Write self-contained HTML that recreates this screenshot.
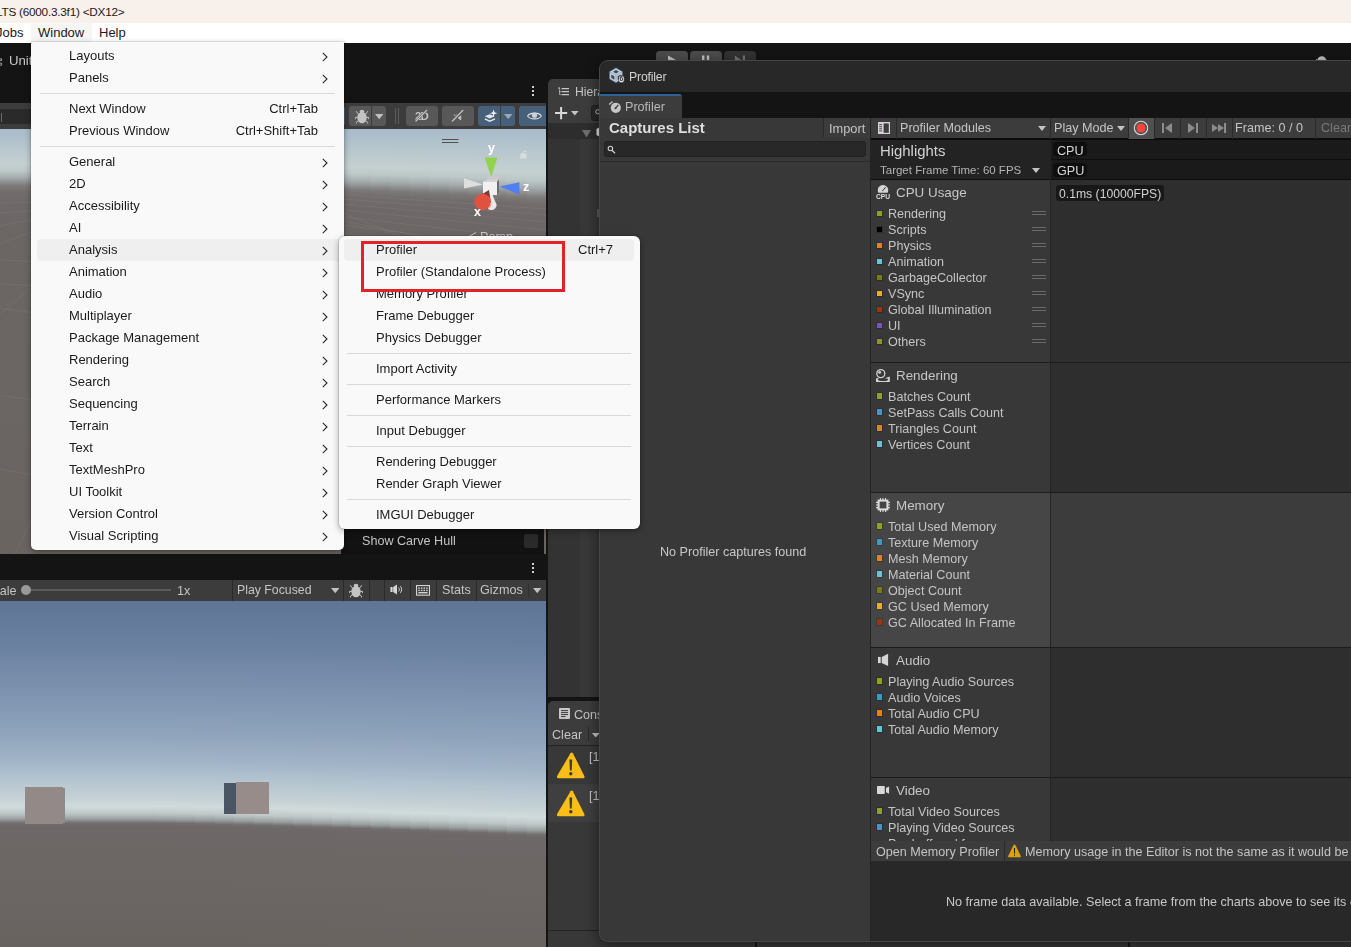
<!DOCTYPE html><html><head><meta charset="utf-8"><title>Unity Profiler</title><style>
*{box-sizing:border-box;margin:0;padding:0}
html,body{width:1351px;height:947px;overflow:hidden;background:#141414}
body{position:relative;font-family:"Liberation Sans",sans-serif;font-size:12.6px;color:#c4c4c4}
.a{position:absolute}
.t{position:absolute;white-space:nowrap;line-height:16px;height:16px;will-change:transform}
.m{position:absolute;white-space:nowrap;font-size:13px;color:#1b1b1b;line-height:22px;height:22px}
.sep{position:absolute;height:1px;background:#d9d9d9}
.chev{position:absolute;width:6px;height:10px}
.sw{position:absolute;width:5.8px;height:5.8px;box-shadow:0 0 0 0.6px rgba(20,20,20,.4)}
.hb{position:absolute;width:14px;height:4px;border-top:1px solid #6a6a6a;border-bottom:1px solid #6a6a6a}
.hl{position:absolute;height:1px;background:#1f1f1f}
</style></head><body>
<div class="a" style="left:0;top:0;width:1351px;height:23px;background:#f8f0ea"></div>
<div class="a" style="left:-4px;top:3px;font-size:11.75px;color:#1b1b1b;white-space:nowrap;line-height:17px;letter-spacing:-0.23px">LTS (6000.3.3f1) &lt;DX12&gt;</div>
<div class="a" style="left:0;top:23px;width:1351px;height:20px;background:#fff"></div>
<div class="a" style="left:31px;top:23px;width:61px;height:20px;background:#f6f6f6"></div>
<div class="m" style="left:-4px;top:22px">Jobs</div>
<div class="m" style="left:38px;top:22px">Window</div>
<div class="m" style="left:99px;top:22px">Help</div>
<div class="a" style="left:0;top:43px;width:1351px;height:904px;background:#141414"></div>
<div class="t" style="left:8.5px;top:53px;font-size:13.2px;color:#c8c8c8">Unity</div>
<div class="a" style="left:0;top:103px;width:546px;height:26px;background:#3c3c3c"></div>
<div class="a" style="left:-5px;top:109px;width:45px;height:15px;background:#2a2a2a;border-radius:3px"></div>
<div class="a" id="scene" style="left:0px;top:129px;width:546px;height:425px;overflow:hidden">
<div class="a" style="left:0.00px;top:0;width:20.10px;height:425px;background:linear-gradient(#a7bbca 0.0px,#b9c8ce 20.5px,#c5d0d1 35.3px,#bcc7c8 42.2px,#a5adae 48.4px,#8b8c8c 53.6px,#7b7877 57.0px,#726d6c 63.0px,#6e6968 75.0px,#6b6664 107.0px,#6a6461 422.0px)"></div>
<div class="a" style="left:19.50px;top:0;width:20.10px;height:425px;background:linear-gradient(#a7bbca 0.0px,#b9c8ce 20.5px,#c5d0d1 35.3px,#bcc7c8 42.2px,#a5adae 48.4px,#8b8c8c 53.6px,#7b7877 57.0px,#726d6c 63.0px,#6e6968 75.0px,#6b6664 107.0px,#6a6461 422.0px)"></div>
<div class="a" style="left:39.00px;top:0;width:20.10px;height:425px;background:linear-gradient(#a7bbca 0.0px,#b9c8ce 20.5px,#c5d0d1 35.3px,#bcc7c8 42.2px,#a5adae 48.4px,#8b8c8c 53.6px,#7b7877 57.0px,#726d6c 63.0px,#6e6968 75.0px,#6b6664 107.0px,#6a6461 422.0px)"></div>
<div class="a" style="left:58.50px;top:0;width:20.10px;height:425px;background:linear-gradient(#a7bbca 0.0px,#b9c8ce 20.5px,#c5d0d1 35.3px,#bcc7c8 42.2px,#a5adae 48.4px,#8b8c8c 53.6px,#7b7877 57.0px,#726d6c 63.0px,#6e6968 75.0px,#6b6664 107.0px,#6a6461 422.0px)"></div>
<div class="a" style="left:78.00px;top:0;width:20.10px;height:425px;background:linear-gradient(#a7bbca 0.0px,#b9c8ce 20.5px,#c5d0d1 35.3px,#bcc7c8 42.2px,#a5adae 48.4px,#8b8c8c 53.6px,#7b7877 57.0px,#726d6c 63.0px,#6e6968 75.0px,#6b6664 107.0px,#6a6461 422.0px)"></div>
<div class="a" style="left:97.50px;top:0;width:20.10px;height:425px;background:linear-gradient(#a7bbca 0.0px,#b9c8ce 20.5px,#c5d0d1 35.3px,#bcc7c8 42.2px,#a5adae 48.5px,#8b8c8c 53.6px,#7b7877 57.0px,#726d6c 63.0px,#6e6968 75.0px,#6b6664 107.0px,#6a6461 422.0px)"></div>
<div class="a" style="left:117.00px;top:0;width:20.10px;height:425px;background:linear-gradient(#a7bbca 0.0px,#b9c8ce 20.5px,#c5d0d1 35.4px,#bcc7c8 42.2px,#a5adae 48.5px,#8b8c8c 53.6px,#7b7877 57.0px,#726d6c 63.0px,#6e6968 75.0px,#6b6664 107.0px,#6a6461 422.0px)"></div>
<div class="a" style="left:136.50px;top:0;width:20.10px;height:425px;background:linear-gradient(#a7bbca 0.0px,#b9c8ce 20.6px,#c5d0d1 35.4px,#bcc7c8 42.3px,#a5adae 48.6px,#8b8c8c 53.7px,#7b7877 57.1px,#726d6c 63.1px,#6e6968 75.1px,#6b6664 107.1px,#6a6461 422.1px)"></div>
<div class="a" style="left:156.00px;top:0;width:20.10px;height:425px;background:linear-gradient(#a7bbca 0.0px,#b9c8ce 20.6px,#c5d0d1 35.5px,#bcc7c8 42.4px,#a5adae 48.7px,#8b8c8c 53.8px,#7b7877 57.3px,#726d6c 63.3px,#6e6968 75.3px,#6b6664 107.3px,#6a6461 422.3px)"></div>
<div class="a" style="left:175.50px;top:0;width:20.10px;height:425px;background:linear-gradient(#a7bbca 0.0px,#b9c8ce 20.7px,#c5d0d1 35.6px,#bcc7c8 42.5px,#a5adae 48.9px,#8b8c8c 54.0px,#7b7877 57.5px,#726d6c 63.5px,#6e6968 75.5px,#6b6664 107.5px,#6a6461 422.5px)"></div>
<div class="a" style="left:195.00px;top:0;width:20.10px;height:425px;background:linear-gradient(#a7bbca 0.0px,#b9c8ce 20.8px,#c5d0d1 35.8px,#bcc7c8 42.7px,#a5adae 49.1px,#8b8c8c 54.3px,#7b7877 57.7px,#726d6c 63.7px,#6e6968 75.7px,#6b6664 107.7px,#6a6461 422.7px)"></div>
<div class="a" style="left:214.50px;top:0;width:20.10px;height:425px;background:linear-gradient(#a7bbca 0.0px,#b9c8ce 20.9px,#c5d0d1 36.0px,#bcc7c8 42.9px,#a5adae 49.3px,#8b8c8c 54.5px,#7b7877 58.0px,#726d6c 64.0px,#6e6968 76.0px,#6b6664 108.0px,#6a6461 423.0px)"></div>
<div class="a" style="left:234.00px;top:0;width:20.10px;height:425px;background:linear-gradient(#a7bbca 0.0px,#b9c8ce 21.0px,#c5d0d1 36.2px,#bcc7c8 43.2px,#a5adae 49.6px,#8b8c8c 54.8px,#7b7877 58.4px,#726d6c 64.4px,#6e6968 76.4px,#6b6664 108.4px,#6a6461 423.4px)"></div>
<div class="a" style="left:253.50px;top:0;width:20.10px;height:425px;background:linear-gradient(#a7bbca 0.0px,#b9c8ce 21.1px,#c5d0d1 36.4px,#bcc7c8 43.5px,#a5adae 49.9px,#8b8c8c 55.2px,#7b7877 58.7px,#726d6c 64.7px,#6e6968 76.7px,#6b6664 108.7px,#6a6461 423.7px)"></div>
<div class="a" style="left:273.00px;top:0;width:20.10px;height:425px;background:linear-gradient(#a7bbca 0.0px,#b9c8ce 21.3px,#c5d0d1 36.7px,#bcc7c8 43.8px,#a5adae 50.3px,#8b8c8c 55.6px,#7b7877 59.2px,#726d6c 65.2px,#6e6968 77.2px,#6b6664 109.2px,#6a6461 424.2px)"></div>
<div class="a" style="left:292.50px;top:0;width:20.10px;height:425px;background:linear-gradient(#a7bbca 0.0px,#b9c8ce 21.5px,#c5d0d1 37.0px,#bcc7c8 44.2px,#a5adae 50.7px,#8b8c8c 56.1px,#7b7877 59.7px,#726d6c 65.7px,#6e6968 77.7px,#6b6664 109.7px,#6a6461 424.7px)"></div>
<div class="a" style="left:312.00px;top:0;width:20.10px;height:425px;background:linear-gradient(#a7bbca 0.0px,#b9c8ce 21.7px,#c5d0d1 37.3px,#bcc7c8 44.6px,#a5adae 51.2px,#8b8c8c 56.6px,#7b7877 60.2px,#726d6c 66.2px,#6e6968 78.2px,#6b6664 110.2px,#6a6461 425.2px)"></div>
<div class="a" style="left:331.50px;top:0;width:20.10px;height:425px;background:linear-gradient(#a7bbca 0.0px,#b9c8ce 21.9px,#c5d0d1 37.7px,#bcc7c8 45.0px,#a5adae 51.7px,#8b8c8c 57.2px,#7b7877 60.8px,#726d6c 66.8px,#6e6968 78.8px,#6b6664 110.8px,#6a6461 425.8px)"></div>
<div class="a" style="left:351.00px;top:0;width:20.10px;height:425px;background:linear-gradient(#a7bbca 0.0px,#b9c8ce 22.1px,#c5d0d1 38.1px,#bcc7c8 45.5px,#a5adae 52.2px,#8b8c8c 57.8px,#7b7877 61.4px,#726d6c 67.4px,#6e6968 79.4px,#6b6664 111.4px,#6a6461 426.4px)"></div>
<div class="a" style="left:370.50px;top:0;width:20.10px;height:425px;background:linear-gradient(#a7bbca 0.0px,#b9c8ce 22.4px,#c5d0d1 38.5px,#bcc7c8 46.0px,#a5adae 52.8px,#8b8c8c 58.4px,#7b7877 62.1px,#726d6c 68.1px,#6e6968 80.1px,#6b6664 112.1px,#6a6461 427.1px)"></div>
<div class="a" style="left:390.00px;top:0;width:20.10px;height:425px;background:linear-gradient(#a7bbca 0.0px,#b9c8ce 22.6px,#c5d0d1 39.0px,#bcc7c8 46.5px,#a5adae 53.4px,#8b8c8c 59.1px,#7b7877 62.9px,#726d6c 68.9px,#6e6968 80.9px,#6b6664 112.9px,#6a6461 427.9px)"></div>
<div class="a" style="left:409.50px;top:0;width:20.10px;height:425px;background:linear-gradient(#a7bbca 0.0px,#b9c8ce 22.9px,#c5d0d1 39.5px,#bcc7c8 47.1px,#a5adae 54.1px,#8b8c8c 59.8px,#7b7877 63.7px,#726d6c 69.7px,#6e6968 81.7px,#6b6664 113.7px,#6a6461 428.7px)"></div>
<div class="a" style="left:429.00px;top:0;width:20.10px;height:425px;background:linear-gradient(#a7bbca 0.0px,#b9c8ce 23.2px,#c5d0d1 40.0px,#bcc7c8 47.7px,#a5adae 54.8px,#8b8c8c 60.6px,#7b7877 64.5px,#726d6c 70.5px,#6e6968 82.5px,#6b6664 114.5px,#6a6461 429.5px)"></div>
<div class="a" style="left:448.50px;top:0;width:20.10px;height:425px;background:linear-gradient(#a7bbca 0.0px,#b9c8ce 23.5px,#c5d0d1 40.5px,#bcc7c8 48.4px,#a5adae 55.6px,#8b8c8c 61.5px,#7b7877 65.4px,#726d6c 71.4px,#6e6968 83.4px,#6b6664 115.4px,#6a6461 430.4px)"></div>
<div class="a" style="left:468.00px;top:0;width:20.10px;height:425px;background:linear-gradient(#a7bbca 0.0px,#b9c8ce 23.9px,#c5d0d1 41.1px,#bcc7c8 49.1px,#a5adae 56.4px,#8b8c8c 62.3px,#7b7877 66.3px,#726d6c 72.3px,#6e6968 84.3px,#6b6664 116.3px,#6a6461 431.3px)"></div>
<div class="a" style="left:487.50px;top:0;width:20.10px;height:425px;background:linear-gradient(#a7bbca 0.0px,#b9c8ce 24.2px,#c5d0d1 41.7px,#bcc7c8 49.8px,#a5adae 57.2px,#8b8c8c 63.3px,#7b7877 67.3px,#726d6c 73.3px,#6e6968 85.3px,#6b6664 117.3px,#6a6461 432.3px)"></div>
<div class="a" style="left:507.00px;top:0;width:20.10px;height:425px;background:linear-gradient(#a7bbca 0.0px,#b9c8ce 24.6px,#c5d0d1 42.4px,#bcc7c8 50.6px,#a5adae 58.1px,#8b8c8c 64.2px,#7b7877 68.4px,#726d6c 74.4px,#6e6968 86.4px,#6b6664 118.4px,#6a6461 433.4px)"></div>
<div class="a" style="left:526.50px;top:0;width:20.10px;height:425px;background:linear-gradient(#a7bbca 0.0px,#b9c8ce 25.0px,#c5d0d1 43.1px,#bcc7c8 51.4px,#a5adae 59.0px,#8b8c8c 65.3px,#7b7877 69.4px,#726d6c 75.4px,#6e6968 87.4px,#6b6664 119.4px,#6a6461 434.4px)"></div>
</div>
<div class="a" style="left:341px;top:520px;width:203px;height:34px;background:#121212"></div>
<div class="t" style="left:362px;top:533px">Show Carve Hull</div>
<div class="a" style="left:524px;top:534px;width:14px;height:14px;background:#2a2a2a;border-radius:2px"></div>
<div class="a" style="left:0;top:554px;width:546px;height:26px;background:#141414"></div>
<div class="a" style="left:0;top:580px;width:546px;height:21px;background:#3c3c3c"></div>
<div class="a" id="game" style="left:0px;top:601px;width:546px;height:346px;overflow:hidden">
<div class="a" style="left:0.00px;top:0;width:20.10px;height:346px;background:linear-gradient(#5f7596 0.0px,#6c82a1 48.8px,#8096b2 99.0px,#90a4bc 133.2px,#a0b3c7 159.0px,#b3c4d0 177.6px,#c5d1d5 196.9px,#d0dbdb 205.4px,#c0c9c9 212.0px,#9aa0a1 218.0px,#726e6d 222.0px,#6e6968 225.0px,#6c6765 262.0px,#68635f 347.0px)"></div>
<div class="a" style="left:19.50px;top:0;width:20.10px;height:346px;background:linear-gradient(#5f7596 0.0px,#6c82a1 48.8px,#8096b2 99.0px,#90a4bc 133.2px,#a0b3c7 159.0px,#b3c4d0 177.6px,#c5d1d5 196.9px,#d0dbdb 205.4px,#c0c9c9 212.0px,#9aa0a1 218.0px,#726e6d 222.0px,#6e6968 225.0px,#6c6765 262.0px,#68635f 347.0px)"></div>
<div class="a" style="left:39.00px;top:0;width:20.10px;height:346px;background:linear-gradient(#5f7596 0.0px,#6c82a1 48.8px,#8096b2 99.0px,#90a4bc 133.2px,#a0b3c7 159.0px,#b3c4d0 177.6px,#c5d1d5 196.9px,#d0dbdb 205.4px,#c0c9c9 212.0px,#9aa0a1 218.0px,#726e6d 222.0px,#6e6968 225.0px,#6c6765 262.0px,#68635f 347.0px)"></div>
<div class="a" style="left:58.50px;top:0;width:20.10px;height:346px;background:linear-gradient(#5f7596 0.0px,#6c82a1 48.8px,#8096b2 99.0px,#90a4bc 133.2px,#a0b3c7 159.0px,#b3c4d0 177.6px,#c5d1d5 196.9px,#d0dbdb 205.4px,#c0c9c9 212.0px,#9aa0a1 218.0px,#726e6d 222.0px,#6e6968 225.0px,#6c6765 262.0px,#68635f 347.0px)"></div>
<div class="a" style="left:78.00px;top:0;width:20.10px;height:346px;background:linear-gradient(#5f7596 0.0px,#6c82a1 48.8px,#8096b2 99.0px,#90a4bc 133.2px,#a0b3c7 159.0px,#b3c4d0 177.6px,#c5d1d5 196.9px,#d0dbdb 205.4px,#c0c9c9 212.0px,#9aa0a1 218.0px,#726e6d 222.0px,#6e6968 225.0px,#6c6765 262.0px,#68635f 347.0px)"></div>
<div class="a" style="left:97.50px;top:0;width:20.10px;height:346px;background:linear-gradient(#5f7596 0.0px,#6c82a1 48.8px,#8096b2 99.0px,#90a4bc 133.2px,#a0b3c7 159.0px,#b3c4d0 177.6px,#c5d1d5 196.9px,#d0dbdb 205.4px,#c0c9c9 212.0px,#9aa0a1 218.0px,#726e6d 222.0px,#6e6968 225.0px,#6c6765 262.0px,#68635f 347.0px)"></div>
<div class="a" style="left:117.00px;top:0;width:20.10px;height:346px;background:linear-gradient(#5f7596 0.0px,#6c82a1 48.8px,#8096b2 99.0px,#90a4bc 133.2px,#a0b3c7 159.0px,#b3c4d0 177.6px,#c5d1d5 196.9px,#d0dbdb 205.4px,#c0c9c9 212.0px,#9aa0a1 218.0px,#726e6d 222.0px,#6e6968 225.0px,#6c6765 262.0px,#68635f 347.0px)"></div>
<div class="a" style="left:136.50px;top:0;width:20.10px;height:346px;background:linear-gradient(#5f7596 0.0px,#6c82a1 48.8px,#8096b2 99.0px,#90a4bc 133.2px,#a0b3c7 159.0px,#b3c4d0 177.6px,#c5d1d5 196.9px,#d0dbdb 205.4px,#c0c9c9 212.0px,#9aa0a1 218.0px,#726e6d 222.0px,#6e6968 225.0px,#6c6765 262.0px,#68635f 347.0px)"></div>
<div class="a" style="left:156.00px;top:0;width:20.10px;height:346px;background:linear-gradient(#5f7596 0.0px,#6c82a1 48.9px,#8096b2 99.1px,#90a4bc 133.3px,#a0b3c7 159.1px,#b3c4d0 177.7px,#c5d1d5 197.1px,#d0dbdb 205.5px,#c0c9c9 212.2px,#9aa0a1 218.2px,#726e6d 222.2px,#6e6968 225.2px,#6c6765 262.2px,#68635f 347.2px)"></div>
<div class="a" style="left:175.50px;top:0;width:20.10px;height:346px;background:linear-gradient(#5f7596 0.0px,#6c82a1 49.0px,#8096b2 99.2px,#90a4bc 133.5px,#a0b3c7 159.3px,#b3c4d0 178.0px,#c5d1d5 197.4px,#d0dbdb 205.8px,#c0c9c9 212.5px,#9aa0a1 218.5px,#726e6d 222.5px,#6e6968 225.5px,#6c6765 262.5px,#68635f 347.5px)"></div>
<div class="a" style="left:195.00px;top:0;width:20.10px;height:346px;background:linear-gradient(#5f7596 0.0px,#6c82a1 49.0px,#8096b2 99.4px,#90a4bc 133.7px,#a0b3c7 159.6px,#b3c4d0 178.3px,#c5d1d5 197.7px,#d0dbdb 206.2px,#c0c9c9 212.9px,#9aa0a1 218.9px,#726e6d 222.9px,#6e6968 225.9px,#6c6765 262.9px,#68635f 347.9px)"></div>
<div class="a" style="left:214.50px;top:0;width:20.10px;height:346px;background:linear-gradient(#5f7596 0.0px,#6c82a1 49.1px,#8096b2 99.6px,#90a4bc 134.0px,#a0b3c7 159.9px,#b3c4d0 178.7px,#c5d1d5 198.1px,#d0dbdb 206.6px,#c0c9c9 213.3px,#9aa0a1 219.3px,#726e6d 223.4px,#6e6968 226.4px,#6c6765 263.4px,#68635f 348.4px)"></div>
<div class="a" style="left:234.00px;top:0;width:20.10px;height:346px;background:linear-gradient(#5f7596 0.0px,#6c82a1 49.2px,#8096b2 99.8px,#90a4bc 134.3px,#a0b3c7 160.3px,#b3c4d0 179.1px,#c5d1d5 198.5px,#d0dbdb 207.1px,#c0c9c9 213.8px,#9aa0a1 219.8px,#726e6d 223.8px,#6e6968 226.8px,#6c6765 263.8px,#68635f 348.8px)"></div>
<div class="a" style="left:253.50px;top:0;width:20.10px;height:346px;background:linear-gradient(#5f7596 0.0px,#6c82a1 49.4px,#8096b2 100.1px,#90a4bc 134.6px,#a0b3c7 160.6px,#b3c4d0 179.5px,#c5d1d5 199.0px,#d0dbdb 207.5px,#c0c9c9 214.3px,#9aa0a1 220.3px,#726e6d 224.4px,#6e6968 227.4px,#6c6765 264.4px,#68635f 349.4px)"></div>
<div class="a" style="left:273.00px;top:0;width:20.10px;height:346px;background:linear-gradient(#5f7596 0.0px,#6c82a1 49.5px,#8096b2 100.3px,#90a4bc 134.9px,#a0b3c7 161.0px,#b3c4d0 179.9px,#c5d1d5 199.5px,#d0dbdb 208.0px,#c0c9c9 214.8px,#9aa0a1 220.8px,#726e6d 224.9px,#6e6968 227.9px,#6c6765 264.9px,#68635f 349.9px)"></div>
<div class="a" style="left:292.50px;top:0;width:20.10px;height:346px;background:linear-gradient(#5f7596 0.0px,#6c82a1 49.6px,#8096b2 100.6px,#90a4bc 135.3px,#a0b3c7 161.4px,#b3c4d0 180.4px,#c5d1d5 200.0px,#d0dbdb 208.6px,#c0c9c9 215.3px,#9aa0a1 221.4px,#726e6d 225.5px,#6e6968 228.5px,#6c6765 265.5px,#68635f 350.5px)"></div>
<div class="a" style="left:312.00px;top:0;width:20.10px;height:346px;background:linear-gradient(#5f7596 0.0px,#6c82a1 49.7px,#8096b2 100.8px,#90a4bc 135.6px,#a0b3c7 161.9px,#b3c4d0 180.8px,#c5d1d5 200.5px,#d0dbdb 209.1px,#c0c9c9 215.9px,#9aa0a1 222.0px,#726e6d 226.1px,#6e6968 229.1px,#6c6765 266.1px,#68635f 351.1px)"></div>
<div class="a" style="left:331.50px;top:0;width:20.10px;height:346px;background:linear-gradient(#5f7596 0.0px,#6c82a1 49.9px,#8096b2 101.1px,#90a4bc 136.0px,#a0b3c7 162.3px,#b3c4d0 181.3px,#c5d1d5 201.0px,#d0dbdb 209.7px,#c0c9c9 216.5px,#9aa0a1 222.6px,#726e6d 226.7px,#6e6968 229.7px,#6c6765 266.7px,#68635f 351.7px)"></div>
<div class="a" style="left:351.00px;top:0;width:20.10px;height:346px;background:linear-gradient(#5f7596 0.0px,#6c82a1 50.0px,#8096b2 101.4px,#90a4bc 136.4px,#a0b3c7 162.7px,#b3c4d0 181.8px,#c5d1d5 201.6px,#d0dbdb 210.2px,#c0c9c9 217.1px,#9aa0a1 223.2px,#726e6d 227.3px,#6e6968 230.3px,#6c6765 267.3px,#68635f 352.3px)"></div>
<div class="a" style="left:370.50px;top:0;width:20.10px;height:346px;background:linear-gradient(#5f7596 0.0px,#6c82a1 50.1px,#8096b2 101.7px,#90a4bc 136.8px,#a0b3c7 163.2px,#b3c4d0 182.3px,#c5d1d5 202.2px,#d0dbdb 210.8px,#c0c9c9 217.7px,#9aa0a1 223.8px,#726e6d 227.9px,#6e6968 230.9px,#6c6765 267.9px,#68635f 352.9px)"></div>
<div class="a" style="left:390.00px;top:0;width:20.10px;height:346px;background:linear-gradient(#5f7596 0.0px,#6c82a1 50.3px,#8096b2 102.0px,#90a4bc 137.2px,#a0b3c7 163.7px,#b3c4d0 182.9px,#c5d1d5 202.8px,#d0dbdb 211.4px,#c0c9c9 218.3px,#9aa0a1 224.5px,#726e6d 228.6px,#6e6968 231.6px,#6c6765 268.6px,#68635f 353.6px)"></div>
<div class="a" style="left:409.50px;top:0;width:20.10px;height:346px;background:linear-gradient(#5f7596 0.0px,#6c82a1 50.4px,#8096b2 102.3px,#90a4bc 137.6px,#a0b3c7 164.2px,#b3c4d0 183.4px,#c5d1d5 203.4px,#d0dbdb 212.1px,#c0c9c9 219.0px,#9aa0a1 225.1px,#726e6d 229.3px,#6e6968 232.3px,#6c6765 269.3px,#68635f 354.3px)"></div>
<div class="a" style="left:429.00px;top:0;width:20.10px;height:346px;background:linear-gradient(#5f7596 0.0px,#6c82a1 50.6px,#8096b2 102.6px,#90a4bc 138.0px,#a0b3c7 164.7px,#b3c4d0 184.0px,#c5d1d5 204.0px,#d0dbdb 212.7px,#c0c9c9 219.6px,#9aa0a1 225.8px,#726e6d 230.0px,#6e6968 233.0px,#6c6765 270.0px,#68635f 355.0px)"></div>
<div class="a" style="left:448.50px;top:0;width:20.10px;height:346px;background:linear-gradient(#5f7596 0.0px,#6c82a1 50.7px,#8096b2 102.9px,#90a4bc 138.4px,#a0b3c7 165.2px,#b3c4d0 184.5px,#c5d1d5 204.6px,#d0dbdb 213.4px,#c0c9c9 220.3px,#9aa0a1 226.5px,#726e6d 230.7px,#6e6968 233.7px,#6c6765 270.7px,#68635f 355.7px)"></div>
<div class="a" style="left:468.00px;top:0;width:20.10px;height:346px;background:linear-gradient(#5f7596 0.0px,#6c82a1 50.9px,#8096b2 103.2px,#90a4bc 138.8px,#a0b3c7 165.7px,#b3c4d0 185.1px,#c5d1d5 205.2px,#d0dbdb 214.0px,#c0c9c9 221.0px,#9aa0a1 227.2px,#726e6d 231.4px,#6e6968 234.4px,#6c6765 271.4px,#68635f 356.4px)"></div>
<div class="a" style="left:487.50px;top:0;width:20.10px;height:346px;background:linear-gradient(#5f7596 0.0px,#6c82a1 51.1px,#8096b2 103.5px,#90a4bc 139.3px,#a0b3c7 166.2px,#b3c4d0 185.7px,#c5d1d5 205.9px,#d0dbdb 214.7px,#c0c9c9 221.7px,#9aa0a1 227.9px,#726e6d 232.1px,#6e6968 235.1px,#6c6765 272.1px,#68635f 357.1px)"></div>
<div class="a" style="left:507.00px;top:0;width:20.10px;height:346px;background:linear-gradient(#5f7596 0.0px,#6c82a1 51.2px,#8096b2 103.9px,#90a4bc 139.7px,#a0b3c7 166.7px,#b3c4d0 186.3px,#c5d1d5 206.5px,#d0dbdb 215.4px,#c0c9c9 222.4px,#9aa0a1 228.7px,#726e6d 232.9px,#6e6968 235.9px,#6c6765 272.9px,#68635f 357.9px)"></div>
<div class="a" style="left:526.50px;top:0;width:20.10px;height:346px;background:linear-gradient(#5f7596 0.0px,#6c82a1 51.4px,#8096b2 104.2px,#90a4bc 140.2px,#a0b3c7 167.3px,#b3c4d0 186.9px,#c5d1d5 207.2px,#d0dbdb 216.1px,#c0c9c9 223.1px,#9aa0a1 229.4px,#726e6d 233.6px,#6e6968 236.6px,#6c6765 273.6px,#68635f 358.6px)"></div>
</div>
<div class="a" style="left:548px;top:79px;width:803px;height:24px;background:#3c3c3c;border-radius:5px 0 0 0"></div>
<div class="a" style="left:548px;top:103px;width:803px;height:20px;background:#3c3c3c"></div>
<div class="a" style="left:548px;top:123px;width:803px;height:16px;background:#2d2d2d"></div>
<div class="a" style="left:548px;top:139px;width:803px;height:558px;background:#383838"></div>
<div class="a" style="left:548px;top:139px;width:32px;height:558px;background:#333333"></div>
<div class="a" style="left:548px;top:701px;width:803px;height:23px;background:#3c3c3c;border-radius:5px 0 0 0"></div>
<div class="a" style="left:548px;top:724px;width:803px;height:22px;background:#3c3c3c"></div>
<div class="a" style="left:548px;top:746px;width:803px;height:38px;background:#383838"></div>
<div class="a" style="left:548px;top:784px;width:803px;height:38px;background:#3f3f3f"></div>
<div class="a" style="left:548px;top:822px;width:803px;height:108px;background:#383838"></div>
<div class="a" style="left:548px;top:931px;width:803px;height:16px;background:#383838"></div>
<div class="a" style="left:755px;top:931px;width:2px;height:16px;background:#161616"></div>
<div class="a" style="left:1128px;top:931px;width:2px;height:16px;background:#161616"></div>
<svg class="a" style="left:532px;top:86px;" width="2" height="10" viewBox="0 0 2 10"><rect x="0" y="0" width="2" height="2" fill="#d0d0d0"/><rect x="0" y="4" width="2" height="2" fill="#d0d0d0"/><rect x="0" y="8" width="2" height="2" fill="#d0d0d0"/></svg>
<div class="a" style="left:338px;top:106px;width:7px;height:20px;background:#46607c;border-radius:0 3px 3px 0"></div>
<div class="a" style="left:349px;top:106px;width:22px;height:20px;background:#585858;border-radius:3px 0 0 3px"></div>
<div class="a" style="left:372px;top:106px;width:14px;height:20px;background:#585858;border-radius:0 3px 3px 0"></div>
<svg class="a" style="left:355px;top:108.6px;" width="14" height="15" viewBox="0 0 14 15"><g fill="#c4c4c4"><ellipse cx="7" cy="8.6" rx="4.7" ry="5.7"/><ellipse cx="7" cy="2.6" rx="2.3" ry="1.9"/></g><g stroke="#c4c4c4" stroke-width="1" fill="none"><path d="M3.4 5.2L1.2 2.2"/><path d="M10.6 5.2L12.8 2.2"/><path d="M2.8 8.4H0.3V10.2"/><path d="M11.2 8.4H13.7V10.2"/><path d="M3.6 11.6L1.4 13.2V14.5"/><path d="M10.4 11.6L12.6 13.2V14.5"/></g></svg>
<svg class="a" style="left:375px;top:114px;" width="8.4" height="5.2" viewBox="0 0 8.4 5.2"><path d="M0 0H8.4L4.2 5.2Z" fill="#c0c0c0"/></svg>
<div class="a" style="left:395px;top:108px;width:1px;height:16px;background:#5c5c5c;"></div>
<div class="a" style="left:398px;top:108px;width:1px;height:16px;background:#5c5c5c;"></div>
<div class="a" style="left:406px;top:106px;width:32px;height:20px;background:#585858;border-radius:3px"></div>
<div class="a" style="left:442px;top:106px;width:32px;height:20px;background:#585858;border-radius:3px"></div>
<div class="a" style="left:478px;top:106px;width:22px;height:20px;background:#46607c;border-radius:3px 0 0 3px"></div>
<div class="a" style="left:501px;top:106px;width:14px;height:20px;background:#46607c;border-radius:0 3px 3px 0"></div>
<div class="a" style="left:519px;top:106px;width:27px;height:20px;background:#46607c;border-radius:3px 0 0 3px"></div>
<svg class="a" style="left:504px;top:114px;" width="8.4" height="5.2" viewBox="0 0 8.4 5.2"><path d="M0 0H8.4L4.2 5.2Z" fill="#9aa7b6"/></svg>
<div class="t" style="left:415px;top:108px;font-size:11.5px;font-weight:bold;color:#c4c4c4;letter-spacing:-0.8px">2D</div>
<svg class="a" style="left:414px;top:109px;" width="16" height="14" viewBox="0 0 16 14"><path d="M1.5 12.5L13 1" stroke="#585858" stroke-width="2.4" fill="none"/><path d="M1.5 12.5L13 1" stroke="#c8c8c8" stroke-width="1.1" fill="none"/></svg>
<svg class="a" style="left:451px;top:109px;" width="14" height="14" viewBox="0 0 14 14"><path d="M3.2 5.5L5.5 9 M5.5 5.5L3.6 9.6" stroke="#c4c4c4" stroke-width="1" fill="none"/><path d="M10.2 6.2V11.6L6.6 8.9Z" fill="#c4c4c4"/><path d="M1 12.5L12.2 1" stroke="#585858" stroke-width="3" fill="none"/><path d="M1 12.5L12.2 1" stroke="#c4c4c4" stroke-width="1.2" fill="none"/></svg>
<svg class="a" style="left:484px;top:109px;" width="14" height="14" viewBox="0 0 14 14"><path d="M0.8 7.2L5.6 5.2L10.6 7.2L5.8 9.4Z" fill="#e6e6e6"/><path d="M0.8 9.8L5.8 12.2L11 9.8" stroke="#e6e6e6" stroke-width="1.4" fill="none"/><path d="M9.6 0.4L10.5 3.3L13.4 4.2L10.5 5.1L9.6 8L8.7 5.1L5.8 4.2L8.7 3.3Z" fill="#f4f4f4"/></svg>
<svg class="a" style="left:527px;top:111px;" width="15" height="10" viewBox="0 0 15 10"><path d="M0.6 5C3 1.2 12 1.2 14.4 5C12 8.8 3 8.8 0.6 5Z" fill="none" stroke="#dedede" stroke-width="1.1"/><circle cx="7.5" cy="4.2" r="2.6" fill="#cfcfcf"/></svg>
<svg class="a" style="left:0px;top:129px;" width="547" height="425" viewBox="0 0 547 425"><g stroke="#ffffff" stroke-opacity="0.055" stroke-width="1" fill="none"><path d="M0 185.5L31 158.6"/><path d="M0 179.5L31 183.5"/><path d="M0 154.6L31 156.6"/><path d="M0 131L31 132.5"/><path d="M0 266L31 271"/><path d="M12 431L31 392"/><path d="M0 115L31 103"/><path d="M0 97L31 91"/><path d="M0 84L31 82"/><path d="M0 74L31 73.5"/><path d="M0 340L31 346"/><path d="M343 66L547 80"/><path d="M343 70L547 86"/><path d="M343 75L547 93"/><path d="M343 81L547 101"/><path d="M343 88L547 111"/><path d="M343 96L547 122"/><path d="M343 104L420 112"/><path d="M343 92L420 107"/><path d="M343 84L400 107"/></g></svg>
<div class="a" style="left:1px;top:113px;width:1px;height:9px;background:#6a6a6a;"></div>
<svg class="a" style="left:442px;top:139px;" width="17" height="5" viewBox="0 0 17 5"><rect x="0" y="0" width="16.4" height="1" fill="#505050"/><rect x="0" y="3" width="16.4" height="1" fill="#505050"/></svg>
<svg class="a" style="left:430px;top:130px;" width="110" height="100" viewBox="0 0 110 100">
<ellipse cx="63.5" cy="48" rx="6" ry="4.6" fill="#c9c9c9"/>
<path d="M54.6 27.6H67.4L61.2 47Z" fill="#8fd44c"/>
<path d="M34 48.2V58.6L52.8 54.6Z" fill="#dedede"/>
<path d="M62.6 65L66.5 74.5C67 79.5 61 81.5 58 79L59 65Z" fill="#e9e9e9"/>
<rect x="53" y="51.7" width="14" height="13.3" fill="#f1f1f1"/>
<path d="M53 51.7L57 49.5H69L67 51.7Z" fill="#d4d4d4"/>
<path d="M67 51.7L69 49.5V62L67 65Z" fill="#6c6c6c"/>
<path d="M69.5 56.6L89.4 52.3V64.5Z" fill="#4f7ff2"/>
<path d="M59 60L49 66L61 73Z" fill="#7b3b36"/>
<circle cx="52.5" cy="72" r="8.2" fill="#e2513f"/>
<path d="M57 65.5L61.5 72.5L58.5 79A8.2 8.2 0 0 0 57 65.5Z" fill="#ea6350"/>
</svg>
<div class="t" style="left:488px;top:140px;font-size:12.5px;color:#ffffff;font-weight:bold">y</div>
<div class="t" style="left:523px;top:179px;font-size:12.5px;color:#ffffff;font-weight:bold">z</div>
<div class="t" style="left:473.5px;top:204px;font-size:12.5px;color:#ffffff;font-weight:bold">x</div>
<svg class="a" style="left:520px;top:150px;" width="7" height="9" viewBox="0 0 7 9"><path d="M3.2 3.6V2.4A1.7 1.7 0 0 1 6.4 2.2" stroke="#d8dde0" stroke-width="1.1" fill="none"/><rect x="0.2" y="3.6" width="6.3" height="5" rx="0.6" fill="#d8dde0"/></svg>
<div class="a" style="left:440px;top:226px;width:100px;height:10.5px;overflow:hidden"><div class="t" style="left:40px;top:3px;font-size:12.6px;color:#c9c9c9">Persp</div><svg class="a" style="left:26px;top:6px" width="11" height="8" viewBox="0 0 11 8"><path d="M10 0.5L1 5.5" stroke="#c9c9c9" stroke-width="1" fill="none"/></svg></div>
<svg class="a" style="left:532px;top:563px;" width="2" height="10" viewBox="0 0 2 10"><rect x="0" y="0" width="2" height="2" fill="#d0d0d0"/><rect x="0" y="4" width="2" height="2" fill="#d0d0d0"/><rect x="0" y="8" width="2" height="2" fill="#d0d0d0"/></svg>
<div class="t" style="left:-15.5px;top:583px;font-size:12.6px;color:#c4c4c4;">Scale</div>
<div class="a" style="left:31px;top:589.3px;width:140px;height:1.6px;background:#5c5c5c;"></div>
<div class="a" style="left:21px;top:585px;width:10px;height:10px;background:#999999;border-radius:5px"></div>
<div class="t" style="left:176.5px;top:583px;font-size:12.6px;color:#c4c4c4;">1x</div>
<div class="a" style="left:232px;top:580px;width:1px;height:21px;background:#2a2a2a;"></div>
<div class="t" style="left:237.3px;top:582px;font-size:12.3px;color:#c4c4c4;">Play Focused</div>
<svg class="a" style="left:330.5px;top:587.5px;" width="8.4" height="5.2" viewBox="0 0 8.4 5.2"><path d="M0 0H8.4L4.2 5.2Z" fill="#c0c0c0"/></svg>
<div class="a" style="left:343px;top:580px;width:1px;height:21px;background:#2a2a2a;"></div>
<svg class="a" style="left:349px;top:582.8px;" width="14" height="15" viewBox="0 0 14 15"><g fill="#c4c4c4"><ellipse cx="7" cy="8.6" rx="4.7" ry="5.7"/><ellipse cx="7" cy="2.6" rx="2.3" ry="1.9"/></g><g stroke="#c4c4c4" stroke-width="1" fill="none"><path d="M3.4 5.2L1.2 2.2"/><path d="M10.6 5.2L12.8 2.2"/><path d="M2.8 8.4H0.3V10.2"/><path d="M11.2 8.4H13.7V10.2"/><path d="M3.6 11.6L1.4 13.2V14.5"/><path d="M10.4 11.6L12.6 13.2V14.5"/></g></svg>
<div class="a" style="left:369px;top:580px;width:1px;height:21px;background:#2a2a2a;"></div>
<div class="a" style="left:384px;top:580px;width:1px;height:21px;background:#2a2a2a;"></div>
<div class="a" style="left:410px;top:580px;width:1px;height:21px;background:#2a2a2a;"></div>
<div class="a" style="left:436px;top:580px;width:1px;height:21px;background:#2a2a2a;"></div>
<div class="a" style="left:476px;top:580px;width:1px;height:21px;background:#2a2a2a;"></div>
<svg class="a" style="left:390px;top:584px;" width="13" height="11" viewBox="0 0 13 11"><rect x="0.4" y="3" width="2.2" height="5" fill="#d6d6d6"/><path d="M3.2 3L7 0.4V10.6L3.2 8Z" fill="#d6d6d6"/><path d="M8.6 3.6C9.6 4.6 9.6 6.4 8.6 7.4" stroke="#d6d6d6" stroke-width="1" fill="none"/><path d="M10.4 2.2C12 4 12 7 10.4 8.8" stroke="#d6d6d6" stroke-width="1" fill="none"/></svg>
<svg class="a" style="left:416px;top:584.5px;" width="14" height="11" viewBox="0 0 14 11"><rect x="0.55" y="0.55" width="12.9" height="9.6" fill="none" stroke="#d4d4d4" stroke-width="1.1"/><g fill="#d4d4d4"><rect x="2.3" y="2.4" width="1.5" height="1.4"/><rect x="4.9" y="2.4" width="1.5" height="1.4"/><rect x="7.5" y="2.4" width="1.5" height="1.4"/><rect x="10.1" y="2.4" width="1.5" height="1.4"/><rect x="2.3" y="4.7" width="1.5" height="1.4"/><rect x="4.9" y="4.7" width="1.5" height="1.4"/><rect x="7.5" y="4.7" width="1.5" height="1.4"/><rect x="10.1" y="4.7" width="1.5" height="1.4"/><rect x="2.3" y="7" width="9.3" height="1.4"/></g></svg>
<div class="t" style="left:441.5px;top:582px;font-size:12.6px;color:#c4c4c4;">Stats</div>
<div class="t" style="left:480px;top:582px;font-size:12.6px;color:#c4c4c4;">Gizmos</div>
<div class="a" style="left:528px;top:584px;width:1px;height:13px;background:#2f2f2f;"></div>
<svg class="a" style="left:532.5px;top:587.5px;" width="8.4" height="5.2" viewBox="0 0 8.4 5.2"><path d="M0 0H8.4L4.2 5.2Z" fill="#c0c0c0"/></svg>
<div class="a" style="left:25px;top:787px;width:38px;height:37px;background:#938986;"></div>
<div class="a" style="left:62.7px;top:788px;width:2.3px;height:35px;background:#8c8a90;"></div>
<div class="a" style="left:224px;top:783px;width:12px;height:31px;background:#4b5664;"></div>
<div class="a" style="left:235.5px;top:782px;width:33px;height:32px;background:#978c89;"></div>
<svg class="a" style="left:558px;top:87px;" width="12" height="9" viewBox="0 0 12 9"><path d="M3.6 1.6H11 M3.6 4.6H11 M3.6 7.6H11" stroke="#c6c6c6" stroke-width="1.2" fill="none"/><path d="M0.3 1.2H2.2 M1.2 0.2V2.2 M1.6 2.4V7.6 M1.6 4.6H2.8 M1.6 7.6H2.8" stroke="#c6c6c6" stroke-width="0.8" fill="none"/></svg>
<div class="t" style="left:574.8px;top:84px;font-size:12.2px;color:#c4c4c4;">Hierarchy</div>
<svg class="a" style="left:555px;top:107px;" width="13" height="13" viewBox="0 0 13 13"><path d="M6.1 0V12.2 M0 6.1H12.2" stroke="#d8d8d8" stroke-width="2" fill="none"/></svg>
<svg class="a" style="left:571px;top:111px;" width="8" height="5" viewBox="0 0 8 5"><path d="M0 0H7.6L3.8 4.6Z" fill="#c4c4c4"/></svg>
<div class="a" style="left:591px;top:105px;width:30px;height:16px;background:#282828;border:1px solid #1f1f1f;border-radius:3px"></div>
<svg class="a" style="left:595px;top:109px;" width="7" height="7" viewBox="0 0 7 7"><circle cx="2.8" cy="2.8" r="2.1" stroke="#bdbdbd" stroke-width="1" fill="none"/><path d="M4.4 4.4L6.6 6.6" stroke="#bdbdbd" stroke-width="1"/></svg>
<svg class="a" style="left:582px;top:129.5px;" width="9" height="7.5" viewBox="0 0 9 7.5"><path d="M0 0H9L4.5 7.5Z" fill="#6e6e6e"/></svg>
<svg class="a" style="left:596px;top:126px;" width="10" height="12" viewBox="0 0 10 12"><path d="M5 0.5L9.5 3V9L5 11.5L0.5 9V3Z" fill="#e6e6e6"/></svg>
<div class="a" style="left:597px;top:208.5px;width:2.2px;height:8.5px;background:#5c5c5c;"></div>
<svg class="a" style="left:558.5px;top:708px;" width="11" height="11" viewBox="0 0 11 11"><rect x="0" y="0" width="11" height="11" rx="1" fill="#c8c8c8"/><path d="M2 2.6H9 M2 4.6H9 M2 6.6H9 M2 8.6H6.5" stroke="#3c3c3c" stroke-width="1"/></svg>
<div class="t" style="left:574.3px;top:707px;font-size:12.6px;color:#c4c4c4;">Console</div>
<div class="t" style="left:552px;top:727px;font-size:12.6px;color:#c4c4c4;">Clear</div>
<div class="a" style="left:587.5px;top:727px;width:1px;height:14px;background:#2a2a2a;"></div>
<svg class="a" style="left:592px;top:732.5px;" width="8" height="5" viewBox="0 0 8 5"><path d="M0 0H7.6L3.8 4.6Z" fill="#c4c4c4"/></svg>
<div class="a" style="left:548px;top:745px;width:52px;height:1px;background:#242424;"></div>
<svg class="a" style="left:557px;top:751.5px;" width="28" height="27" viewBox="0 0 28 27"><path d="M13.5 1.2C14.3 0.2 15.3 0.2 15.9 1.2L27.3 24C27.9 25.3 27.3 26.3 25.9 26.3H1.5C0.1 26.3 -0.5 25.3 0.1 24Z" fill="#fbbd17"/><path d="M12.4 7.5H15.2L14.7 18.5H12.9Z" fill="#3b3b3b"/><circle cx="13.8" cy="21.8" r="1.7" fill="#3b3b3b"/></svg>
<svg class="a" style="left:557px;top:790px;" width="28" height="27" viewBox="0 0 28 27"><path d="M13.5 1.2C14.3 0.2 15.3 0.2 15.9 1.2L27.3 24C27.9 25.3 27.3 26.3 25.9 26.3H1.5C0.1 26.3 -0.5 25.3 0.1 24Z" fill="#fbbd17"/><path d="M12.4 7.5H15.2L14.7 18.5H12.9Z" fill="#3b3b3b"/><circle cx="13.8" cy="21.8" r="1.7" fill="#3b3b3b"/></svg>
<div class="t" style="left:588.5px;top:749px;font-size:12.6px;color:#c4c4c4;">[18:02:11]</div>
<div class="t" style="left:588.5px;top:788px;font-size:12.6px;color:#c4c4c4;">[18:02:11]</div>
<div class="a" style="left:548px;top:930px;width:803px;height:1px;background:#232323;"></div>
<div class="a" style="left:656px;top:51px;width:32px;height:20px;background:#4d4d4d;border-radius:4px"></div>
<div class="a" style="left:690px;top:51px;width:32px;height:20px;background:#4d4d4d;border-radius:4px"></div>
<div class="a" style="left:724px;top:51px;width:32px;height:20px;background:#333333;border-radius:4px"></div>
<svg class="a" style="left:667px;top:55px;" width="12" height="12" viewBox="0 0 12 12"><path d="M1 0.5L10 5.6L1 10.8Z" fill="#c8c8c8"/></svg>
<svg class="a" style="left:701px;top:55px;" width="10" height="12" viewBox="0 0 10 12"><rect x="1" y="0.5" width="2.4" height="10" fill="#c8c8c8"/><rect x="5.8" y="0.5" width="2.4" height="10" fill="#c8c8c8"/></svg>
<svg class="a" style="left:734px;top:55px;" width="12" height="12" viewBox="0 0 12 12"><path d="M0.8 0.5L8 5.6L0.8 10.8Z" fill="#777"/><rect x="8.8" y="0.5" width="2.2" height="10" fill="#777"/></svg>
<svg class="a" style="left:1314px;top:55px;" width="16" height="7" viewBox="0 0 16 7"><path d="M1 6.4L2.6 3.8L3.6 5C3.4 1 10.6 -0.6 12 4.4C13.2 4.4 14 5.4 14.4 6.4Z" fill="#c6c6c6"/></svg>
<svg class="a" style="left:-1px;top:58px;" width="4" height="8" viewBox="0 0 4 8"><path d="M0 0.8H2.6V2.6H0 M0 5.2H2.6V7.2H0" stroke="#9a9a9a" stroke-width="1" fill="none"/></svg>
<div class="a" id="pw" style="left:600px;top:61px;width:760px;height:880px;background:#383838;border-radius:8px 0 0 8px;overflow:hidden;box-shadow:0 0 0 1px #464646, 0 3px 14px 2px rgba(0,0,0,.45)">
<div class="a" style="left:0px;top:0px;width:760px;height:31px;background:#282828;"></div>
<div class="a" style="left:0px;top:31px;width:760px;height:26px;background:#141414;"></div>
<div class="a" style="left:0px;top:33px;width:82px;height:24px;background:#3c3c3c;border-top:2px solid #2d6198;border-radius:0 3px 0 0"></div>
<div class="a" style="left:0px;top:57px;width:270px;height:21px;background:#383838;"></div>
<div class="a" style="left:224px;top:57px;width:46px;height:19px;background:#3c3c3c;"></div>
<div class="a" style="left:4px;top:80px;width:262px;height:16px;background:#282828;border:1px solid #212121;border-radius:3px"></div>
<div class="a" style="left:0px;top:100px;width:270px;height:1px;background:#2a2a2a;"></div>
<div class="a" style="left:270px;top:57px;width:1px;height:823px;background:#232323;"></div>
<div class="a" style="left:271px;top:57px;width:489px;height:21px;background:#3c3c3c;"></div>
<div class="a" style="left:271px;top:77px;width:489px;height:2px;background:#0b0b0b;"></div>
<div class="a" style="left:271px;top:79px;width:179px;height:40px;background:#232323;"></div>
<div class="a" style="left:451px;top:79px;width:309px;height:19px;background:#1a1a1a;"></div>
<div class="a" style="left:451px;top:99px;width:309px;height:19px;background:#1a1a1a;"></div>
<div class="a" style="left:451px;top:98px;width:309px;height:1px;background:#0e0e0e;"></div>
<div class="a" style="left:271px;top:118px;width:489px;height:1px;background:#0e0e0e;"></div>
<div class="a" style="left:450px;top:79px;width:1px;height:701px;background:#232323;"></div>
<div class="a" style="left:271px;top:119px;width:179px;height:182px;background:#383838;"></div>
<div class="a" style="left:451px;top:119px;width:309px;height:182px;background:#2e2e2e;"></div>
<div class="a" style="left:271px;top:301px;width:489px;height:1px;background:#1c1c1c;"></div>
<div class="a" style="left:271px;top:302px;width:179px;height:129px;background:#383838;"></div>
<div class="a" style="left:451px;top:302px;width:309px;height:129px;background:#2e2e2e;"></div>
<div class="a" style="left:271px;top:431px;width:489px;height:1px;background:#1c1c1c;"></div>
<div class="a" style="left:271px;top:432px;width:179px;height:154px;background:#464646;"></div>
<div class="a" style="left:451px;top:432px;width:309px;height:154px;background:#3c3c3c;"></div>
<div class="a" style="left:271px;top:586px;width:489px;height:1px;background:#1c1c1c;"></div>
<div class="a" style="left:271px;top:587px;width:179px;height:129px;background:#383838;"></div>
<div class="a" style="left:451px;top:587px;width:309px;height:129px;background:#2e2e2e;"></div>
<div class="a" style="left:271px;top:716px;width:489px;height:1px;background:#1c1c1c;"></div>
<div class="a" style="left:271px;top:717px;width:179px;height:63px;background:#383838;"></div>
<div class="a" style="left:451px;top:717px;width:309px;height:63px;background:#2e2e2e;"></div>
<div class="a" style="left:271px;top:780px;width:489px;height:1px;background:#1c1c1c;"></div>
<div class="a" style="left:271px;top:780px;width:489px;height:20px;background:#3c3c3c;"></div>
<div class="a" style="left:271px;top:800px;width:489px;height:80px;background:#282828;"></div>
<svg class="a" style="left:8px;top:6px;" width="18" height="18" viewBox="0 0 18 18"><path d="M8 1L14.3 4.65V11.95L8 15.6L1.7 11.95V4.65Z" fill="#c6d3e1" stroke="#6f86a0" stroke-width="0.7"/><path d="M8 8.3L1.7 4.65 M8 8.3L14.3 4.65 M8 8.3V15.6" stroke="#8396ab" stroke-width="0.7" fill="none"/><g fill="#3b4a5b"><path d="M8 2.9L11 4.65L8 6.4L5 4.65Z"/><path d="M3.3 7.5L6.4 9.3V12.7L3.3 10.9Z"/><path d="M12.7 7.5V10.9L9.6 12.7V9.3Z"/></g><rect x="10.6" y="8.4" width="5.6" height="7.4" rx="2.4" fill="#dfe7ef" stroke="#282828" stroke-width="0.7"/><text x="13.4" y="14.4" font-size="6.6" font-weight="bold" text-anchor="middle" fill="#2c333c" font-family="Liberation Sans, sans-serif">6</text></svg>
<svg class="a" style="left:8px;top:39px;" width="15" height="14" viewBox="0 0 15 14"><circle cx="7.8" cy="7.8" r="5.1" fill="#c6c6c6"/><path d="M7.4 8.4L10.3 5" stroke="#3c3c3c" stroke-width="1.2" fill="none"/><circle cx="7.5" cy="8.3" r="1" fill="#3c3c3c"/><path d="M1.2 4.4L4.6 1.4" stroke="#c6c6c6" stroke-width="1.3" fill="none"/></svg>
<svg class="a" style="left:7px;top:84px;" width="10" height="10" viewBox="0 0 10 10"><circle cx="3.4" cy="3.5" r="2.2" stroke="#d0d0d0" stroke-width="1.1" fill="none"/><path d="M5 5.2L8 8.2" stroke="#d0d0d0" stroke-width="1.3" fill="none"/></svg>
<svg class="a" style="left:278px;top:61px;" width="12" height="12" viewBox="0 0 12 12"><rect x="0" y="0" width="12.2" height="12.2" rx="0.6" fill="#d6d2d6"/><rect x="5.6" y="1.4" width="5.2" height="9.4" fill="#3c3c3c"/><path d="M1.2 2.6H4 M1.2 4.7H4 M1.2 6.8H4 M1.2 8.9H4" stroke="#3a2f3a" stroke-width="0.9"/></svg>
<svg class="a" style="left:275px;top:123px;" width="16" height="16" viewBox="0 0 16 16"><path d="M3.44 8.7A5.2 5.2 0 1 1 12.56 8.7Z" fill="#d4d4d4"/><path d="M7.4 7.2L10.6 3.2" stroke="#383838" stroke-width="1"/><text x="8" y="15" font-size="6.7" font-weight="bold" text-anchor="middle" fill="#dedede" font-family="Liberation Sans, sans-serif" letter-spacing="-0.1">CPU</text></svg>
<svg class="a" style="left:275px;top:306px;" width="16" height="16" viewBox="0 0 16 16"><path d="M1 15V11.2H3.2C4.6 13 8.4 13 9.8 11.2L14.8 9.6V15Z" fill="#d2d2d2"/><ellipse cx="8" cy="12.6" rx="5" ry="1.5" fill="#383838"/><circle cx="5.8" cy="6.6" r="4" fill="#383838" stroke="#d2d2d2" stroke-width="1.3"/><circle cx="4.6" cy="5.2" r="1.5" fill="#c8c8c8"/></svg>
<svg class="a" style="left:275px;top:436px;" width="16" height="16" viewBox="0 0 16 16"><rect x="3.6" y="3.6" width="8.8" height="8.8" fill="none" stroke="#dcdcdc" stroke-width="2"/><path d="M5.4 1V3 M8 1V3 M10.6 1V3 M5.4 13V15 M8 13V15 M10.6 13V15 M1 5.4H3 M1 8H3 M1 10.6H3 M13 5.4H15 M13 8H15 M13 10.6H15" stroke="#dcdcdc" stroke-width="1.1"/></svg>
<svg class="a" style="left:277px;top:592px;" width="12" height="14" viewBox="0 0 12 14"><rect x="1" y="3.9" width="2.7" height="6.2" fill="#d6d6d6"/><path d="M4.7 3.9L11.1 0.8V13L4.7 10.1Z" fill="#d6d6d6"/></svg>
<svg class="a" style="left:276px;top:724px;" width="14" height="10" viewBox="0 0 14 10"><rect x="1" y="1" width="7.8" height="8" rx="0.8" fill="#d8d8d8"/><path d="M10 3L13.1 1.6V8.7L10 7.2Z" fill="#d8d8d8"/></svg>
<div class="t" style="left:28.600000000000023px;top:8px;font-size:12.3px;color:#d0d0d0;letter-spacing:-0.2px">Profiler</div>
<div class="t" style="left:24.600000000000023px;top:38px;font-size:12.6px;color:#b8b8b8;">Profiler</div>
<div class="t" style="left:8.5px;top:59px;font-size:15px;color:#dedede;font-weight:bold">Captures List</div>
<div class="a" style="left:223px;top:57px;width:1px;height:19px;background:#2a2a2a;"></div>
<div class="t" style="left:228.60000000000002px;top:60px;font-size:12.8px;color:#c4c4c4;">Import</div>
<div class="t" style="left:60px;top:483px;font-size:12.6px;color:#c8c8c8;">No Profiler captures found</div>
<div class="a" style="left:296px;top:57px;width:1px;height:21px;background:#2a2a2a;"></div>
<div class="t" style="left:300px;top:59px;font-size:12.6px;color:#c4c4c4;">Profiler Modules</div>
<svg class="a" style="left:438px;top:65px;" width="8" height="5" viewBox="0 0 8 5"><path d="M0 0H8L4 5Z" fill="#c4c4c4"/></svg>
<div class="a" style="left:450px;top:57px;width:1px;height:21px;background:#2a2a2a;"></div>
<div class="t" style="left:454px;top:59px;font-size:12.6px;color:#c4c4c4;">Play Mode</div>
<svg class="a" style="left:517px;top:65px;" width="8" height="5" viewBox="0 0 8 5"><path d="M0 0H8L4 5Z" fill="#c4c4c4"/></svg>
<div class="a" style="left:529px;top:57px;width:25px;height:21px;background:#505050;"></div>
<div class="a" style="left:528px;top:57px;width:1px;height:21px;background:#2a2a2a;"></div>
<div class="a" style="left:554px;top:57px;width:1px;height:21px;background:#2a2a2a;"></div>
<div class="a" style="left:580px;top:57px;width:1px;height:21px;background:#2a2a2a;"></div>
<div class="a" style="left:606px;top:57px;width:1px;height:21px;background:#2a2a2a;"></div>
<div class="a" style="left:632px;top:57px;width:1px;height:21px;background:#2a2a2a;"></div>
<div class="a" style="left:715px;top:57px;width:1px;height:21px;background:#2a2a2a;"></div>
<svg class="a" style="left:533px;top:59px;" width="16" height="16" viewBox="0 0 16 16"><circle cx="8" cy="8" r="6.7" fill="none" stroke="#d4d4d4" stroke-width="1.1"/><circle cx="8" cy="8" r="4.5" fill="#f5463d"/></svg>
<svg class="a" style="left:561px;top:62px;" width="12" height="10" viewBox="0 0 12 10"><path d="M1 0H3V10H1Z M11 0V10L4 5Z" fill="#8c8c8c"/></svg>
<svg class="a" style="left:587px;top:62px;" width="12" height="10" viewBox="0 0 12 10"><path d="M9 0H11V10H9Z M1 0V10L8 5Z" fill="#8c8c8c"/></svg>
<svg class="a" style="left:611px;top:62px;" width="16" height="10" viewBox="0 0 16 10"><path d="M13 0H15V10H13Z M1 1V9L7 5Z M7 1V9L13 5Z" fill="#8c8c8c"/></svg>
<div class="t" style="left:635.2px;top:59px;font-size:12.6px;color:#c4c4c4;">Frame: 0 / 0</div>
<div class="t" style="left:721px;top:59px;font-size:12.6px;color:#787878;">Clear</div>
<div class="t" style="left:280.29999999999995px;top:82px;font-size:14.9px;color:#d2d2d2;">Highlights</div>
<div class="t" style="left:279.5px;top:101px;font-size:11.5px;color:#b4b4b4;">Target Frame Time: 60 FPS</div>
<svg class="a" style="left:432px;top:107px;" width="8" height="5" viewBox="0 0 8 5"><path d="M0 0H8L4 5Z" fill="#c4c4c4"/></svg>
<div class="a" style="left:453px;top:81px;width:34px;height:14px;background:#0e0e0e;border-radius:4px"></div>
<div class="a" style="left:453px;top:101.5px;width:34px;height:14px;background:#0e0e0e;border-radius:4px"></div>
<div class="t" style="left:457px;top:82px;font-size:12.6px;color:#d6d6d6;">CPU</div>
<div class="t" style="left:457px;top:102px;font-size:12.6px;color:#d6d6d6;">GPU</div>
<div class="a" style="left:456px;top:124px;width:108px;height:15.5px;background:#181818;border-radius:3px"></div>
<div class="t" style="left:459px;top:125px;font-size:12.2px;color:#d0d0d0;">0.1ms (10000FPS)</div>
<div class="t" style="left:296.20000000000005px;top:124px;font-size:13.4px;color:#c6c6c6;">CPU Usage</div>
<div class="sw" style="left:276.6px;top:149.5px;background:#8aa614"></div>
<div class="t" style="left:288px;top:145px;font-size:12.6px;color:#c4c4c4;">Rendering</div>
<div class="hb" style="left:432px;top:150.4px"></div>
<div class="sw" style="left:276.6px;top:165.5px;background:#000000"></div>
<div class="t" style="left:288px;top:161px;font-size:12.6px;color:#c4c4c4;">Scripts</div>
<div class="hb" style="left:432px;top:166.4px"></div>
<div class="sw" style="left:276.6px;top:181.5px;background:#e8820e"></div>
<div class="t" style="left:288px;top:177px;font-size:12.6px;color:#c4c4c4;">Physics</div>
<div class="hb" style="left:432px;top:182.4px"></div>
<div class="sw" style="left:276.6px;top:197.5px;background:#62c6d4"></div>
<div class="t" style="left:288px;top:193px;font-size:12.6px;color:#c4c4c4;">Animation</div>
<div class="hb" style="left:432px;top:198.39999999999998px"></div>
<div class="sw" style="left:276.6px;top:213.5px;background:#7c7a12"></div>
<div class="t" style="left:288px;top:209px;font-size:12.6px;color:#c4c4c4;">GarbageCollector</div>
<div class="hb" style="left:432px;top:214.39999999999998px"></div>
<div class="sw" style="left:276.6px;top:229.5px;background:#e2b50d"></div>
<div class="t" style="left:288px;top:225px;font-size:12.6px;color:#c4c4c4;">VSync</div>
<div class="hb" style="left:432px;top:230.39999999999998px"></div>
<div class="sw" style="left:276.6px;top:245.5px;background:#a3300f"></div>
<div class="t" style="left:288px;top:241px;font-size:12.6px;color:#c4c4c4;">Global Illumination</div>
<div class="hb" style="left:432px;top:246.39999999999998px"></div>
<div class="sw" style="left:276.6px;top:261.5px;background:#7a55b5"></div>
<div class="t" style="left:288px;top:257px;font-size:12.6px;color:#c4c4c4;">UI</div>
<div class="hb" style="left:432px;top:262.4px"></div>
<div class="sw" style="left:276.6px;top:277.5px;background:#8f9425"></div>
<div class="t" style="left:288px;top:273px;font-size:12.6px;color:#c4c4c4;">Others</div>
<div class="hb" style="left:432px;top:278.4px"></div>
<div class="t" style="left:296.20000000000005px;top:307px;font-size:13.4px;color:#c6c6c6;">Rendering</div>
<div class="sw" style="left:276.6px;top:332.40000000000003px;background:#8aa614"></div>
<div class="t" style="left:288px;top:328px;font-size:12.6px;color:#c4c4c4;">Batches Count</div>
<div class="sw" style="left:276.6px;top:348.40000000000003px;background:#3a9ac0"></div>
<div class="t" style="left:288px;top:344px;font-size:12.6px;color:#c4c4c4;">SetPass Calls Count</div>
<div class="sw" style="left:276.6px;top:364.40000000000003px;background:#e8820e"></div>
<div class="t" style="left:288px;top:360px;font-size:12.6px;color:#c4c4c4;">Triangles Count</div>
<div class="sw" style="left:276.6px;top:380.40000000000003px;background:#62c6d4"></div>
<div class="t" style="left:288px;top:376px;font-size:12.6px;color:#c4c4c4;">Vertices Count</div>
<div class="t" style="left:296.20000000000005px;top:437px;font-size:13.4px;color:#c6c6c6;">Memory</div>
<div class="sw" style="left:276.6px;top:462.30000000000007px;background:#8aa614"></div>
<div class="t" style="left:288px;top:458px;font-size:12.6px;color:#c4c4c4;">Total Used Memory</div>
<div class="sw" style="left:276.6px;top:478.30000000000007px;background:#3a9ac0"></div>
<div class="t" style="left:288px;top:474px;font-size:12.6px;color:#c4c4c4;">Texture Memory</div>
<div class="sw" style="left:276.6px;top:494.30000000000007px;background:#e8820e"></div>
<div class="t" style="left:288px;top:490px;font-size:12.6px;color:#c4c4c4;">Mesh Memory</div>
<div class="sw" style="left:276.6px;top:510.30000000000007px;background:#62c6d4"></div>
<div class="t" style="left:288px;top:506px;font-size:12.6px;color:#c4c4c4;">Material Count</div>
<div class="sw" style="left:276.6px;top:526.3000000000001px;background:#7c7a12"></div>
<div class="t" style="left:288px;top:522px;font-size:12.6px;color:#c4c4c4;">Object Count</div>
<div class="sw" style="left:276.6px;top:542.3000000000001px;background:#e2b50d"></div>
<div class="t" style="left:288px;top:538px;font-size:12.6px;color:#c4c4c4;">GC Used Memory</div>
<div class="sw" style="left:276.6px;top:558.3000000000001px;background:#a3300f"></div>
<div class="t" style="left:288px;top:554px;font-size:12.6px;color:#c4c4c4;">GC Allocated In Frame</div>
<div class="t" style="left:296.20000000000005px;top:592px;font-size:13.4px;color:#c6c6c6;">Audio</div>
<div class="sw" style="left:276.6px;top:617.4px;background:#8aa614"></div>
<div class="t" style="left:288px;top:613px;font-size:12.6px;color:#c4c4c4;">Playing Audio Sources</div>
<div class="sw" style="left:276.6px;top:633.4px;background:#3a9ac0"></div>
<div class="t" style="left:288px;top:629px;font-size:12.6px;color:#c4c4c4;">Audio Voices</div>
<div class="sw" style="left:276.6px;top:649.4px;background:#e8820e"></div>
<div class="t" style="left:288px;top:645px;font-size:12.6px;color:#c4c4c4;">Total Audio CPU</div>
<div class="sw" style="left:276.6px;top:665.4px;background:#62c6d4"></div>
<div class="t" style="left:288px;top:661px;font-size:12.6px;color:#c4c4c4;">Total Audio Memory</div>
<div class="t" style="left:296.20000000000005px;top:722px;font-size:13.4px;color:#c6c6c6;">Video</div>
<div class="sw" style="left:276.6px;top:747.4px;background:#8aa614"></div>
<div class="t" style="left:288px;top:743px;font-size:12.6px;color:#c4c4c4;">Total Video Sources</div>
<div class="sw" style="left:276.6px;top:763.4px;background:#3a9ac0"></div>
<div class="t" style="left:288px;top:759px;font-size:12.6px;color:#c4c4c4;">Playing Video Sources</div>
<div class="a" style="left:271px;top:775px;width:179px;height:5px;overflow:hidden"><div class="t" style="left:17px;top:0px">Pre-buffered frames</div></div>
<div class="t" style="left:275.5px;top:783px;font-size:12.6px;color:#c4c4c4;">Open Memory Profiler</div>
<div class="a" style="left:404px;top:780px;width:1px;height:20px;background:#2a2a2a;"></div>
<svg class="a" style="left:408px;top:782.5px;" width="13" height="14" viewBox="0 0 13 14"><path d="M6.5 0.4C6.9 0.4 7.2 0.7 7.4 1L12.8 12C13 12.6 12.8 13.3 12 13.3H1C0.2 13.3 0 12.6 0.2 12L5.6 1C5.8 0.7 6.1 0.4 6.5 0.4Z" fill="#dba20a"/><rect x="6" y="4" width="1" height="5.6" fill="#241a00"/><rect x="6" y="10.6" width="1" height="1.2" fill="#241a00"/></svg>
<div class="t" style="left:424.5px;top:783px;font-size:12.6px;color:#c4c4c4;">Memory usage in the Editor is not the same as it would be in a Player. Use this for relative comparisons only.</div>
<div class="t" style="left:345.5px;top:833px;font-size:12.6px;color:#c8c8c8;">No frame data available. Select a frame from the charts above to see its details here.</div>
</div>
<div class="a" style="left:31px;top:42px;width:313px;height:508px;background:#f9f9f9;border-radius:2px 0 5px 5px;box-shadow:0 2px 6px rgba(0,0,0,.35), 0 0 0 1px rgba(0,0,0,.08)"></div>
<div class="a" style="left:37px;top:239px;width:306px;height:22px;background:#efefef;border-radius:4px"></div>
<div class="m" style="left:69px;top:45.0px">Layouts</div>
<svg class="chev" style="left:322px;top:52.0px" viewBox="0 0 6 10"><path d="M0.8 0.8 L5 5 L0.8 9.2" fill="none" stroke="#2a2a2a" stroke-width="1.1"/></svg>
<div class="m" style="left:69px;top:67.0px">Panels</div>
<svg class="chev" style="left:322px;top:74.0px" viewBox="0 0 6 10"><path d="M0.8 0.8 L5 5 L0.8 9.2" fill="none" stroke="#2a2a2a" stroke-width="1.1"/></svg>
<div class="m" style="left:69px;top:98.0px">Next Window</div>
<div class="m" style="right:1033px;top:98.0px">Ctrl+Tab</div>
<div class="m" style="left:69px;top:120.0px">Previous Window</div>
<div class="m" style="right:1033px;top:120.0px">Ctrl+Shift+Tab</div>
<div class="m" style="left:69px;top:150.5px">General</div>
<svg class="chev" style="left:322px;top:157.5px" viewBox="0 0 6 10"><path d="M0.8 0.8 L5 5 L0.8 9.2" fill="none" stroke="#2a2a2a" stroke-width="1.1"/></svg>
<div class="m" style="left:69px;top:172.5px">2D</div>
<svg class="chev" style="left:322px;top:179.5px" viewBox="0 0 6 10"><path d="M0.8 0.8 L5 5 L0.8 9.2" fill="none" stroke="#2a2a2a" stroke-width="1.1"/></svg>
<div class="m" style="left:69px;top:194.5px">Accessibility</div>
<svg class="chev" style="left:322px;top:201.5px" viewBox="0 0 6 10"><path d="M0.8 0.8 L5 5 L0.8 9.2" fill="none" stroke="#2a2a2a" stroke-width="1.1"/></svg>
<div class="m" style="left:69px;top:216.5px">AI</div>
<svg class="chev" style="left:322px;top:223.5px" viewBox="0 0 6 10"><path d="M0.8 0.8 L5 5 L0.8 9.2" fill="none" stroke="#2a2a2a" stroke-width="1.1"/></svg>
<div class="m" style="left:69px;top:238.5px">Analysis</div>
<svg class="chev" style="left:322px;top:245.5px" viewBox="0 0 6 10"><path d="M0.8 0.8 L5 5 L0.8 9.2" fill="none" stroke="#2a2a2a" stroke-width="1.1"/></svg>
<div class="m" style="left:69px;top:260.5px">Animation</div>
<svg class="chev" style="left:322px;top:267.5px" viewBox="0 0 6 10"><path d="M0.8 0.8 L5 5 L0.8 9.2" fill="none" stroke="#2a2a2a" stroke-width="1.1"/></svg>
<div class="m" style="left:69px;top:282.5px">Audio</div>
<svg class="chev" style="left:322px;top:289.5px" viewBox="0 0 6 10"><path d="M0.8 0.8 L5 5 L0.8 9.2" fill="none" stroke="#2a2a2a" stroke-width="1.1"/></svg>
<div class="m" style="left:69px;top:304.5px">Multiplayer</div>
<svg class="chev" style="left:322px;top:311.5px" viewBox="0 0 6 10"><path d="M0.8 0.8 L5 5 L0.8 9.2" fill="none" stroke="#2a2a2a" stroke-width="1.1"/></svg>
<div class="m" style="left:69px;top:326.5px">Package Management</div>
<svg class="chev" style="left:322px;top:333.5px" viewBox="0 0 6 10"><path d="M0.8 0.8 L5 5 L0.8 9.2" fill="none" stroke="#2a2a2a" stroke-width="1.1"/></svg>
<div class="m" style="left:69px;top:348.5px">Rendering</div>
<svg class="chev" style="left:322px;top:355.5px" viewBox="0 0 6 10"><path d="M0.8 0.8 L5 5 L0.8 9.2" fill="none" stroke="#2a2a2a" stroke-width="1.1"/></svg>
<div class="m" style="left:69px;top:370.5px">Search</div>
<svg class="chev" style="left:322px;top:377.5px" viewBox="0 0 6 10"><path d="M0.8 0.8 L5 5 L0.8 9.2" fill="none" stroke="#2a2a2a" stroke-width="1.1"/></svg>
<div class="m" style="left:69px;top:392.5px">Sequencing</div>
<svg class="chev" style="left:322px;top:399.5px" viewBox="0 0 6 10"><path d="M0.8 0.8 L5 5 L0.8 9.2" fill="none" stroke="#2a2a2a" stroke-width="1.1"/></svg>
<div class="m" style="left:69px;top:414.5px">Terrain</div>
<svg class="chev" style="left:322px;top:421.5px" viewBox="0 0 6 10"><path d="M0.8 0.8 L5 5 L0.8 9.2" fill="none" stroke="#2a2a2a" stroke-width="1.1"/></svg>
<div class="m" style="left:69px;top:436.5px">Text</div>
<svg class="chev" style="left:322px;top:443.5px" viewBox="0 0 6 10"><path d="M0.8 0.8 L5 5 L0.8 9.2" fill="none" stroke="#2a2a2a" stroke-width="1.1"/></svg>
<div class="m" style="left:69px;top:458.5px">TextMeshPro</div>
<svg class="chev" style="left:322px;top:465.5px" viewBox="0 0 6 10"><path d="M0.8 0.8 L5 5 L0.8 9.2" fill="none" stroke="#2a2a2a" stroke-width="1.1"/></svg>
<div class="m" style="left:69px;top:480.5px">UI Toolkit</div>
<svg class="chev" style="left:322px;top:487.5px" viewBox="0 0 6 10"><path d="M0.8 0.8 L5 5 L0.8 9.2" fill="none" stroke="#2a2a2a" stroke-width="1.1"/></svg>
<div class="m" style="left:69px;top:502.5px">Version Control</div>
<svg class="chev" style="left:322px;top:509.5px" viewBox="0 0 6 10"><path d="M0.8 0.8 L5 5 L0.8 9.2" fill="none" stroke="#2a2a2a" stroke-width="1.1"/></svg>
<div class="m" style="left:69px;top:524.5px">Visual Scripting</div>
<svg class="chev" style="left:322px;top:531.5px" viewBox="0 0 6 10"><path d="M0.8 0.8 L5 5 L0.8 9.2" fill="none" stroke="#2a2a2a" stroke-width="1.1"/></svg>
<div class="sep" style="left:40px;top:93px;width:295px"></div>
<div class="sep" style="left:40px;top:146px;width:295px"></div>
<div class="a" style="left:339px;top:236px;width:301px;height:293px;background:#f9f9f9;border-radius:6px;box-shadow:0 2px 7px rgba(0,0,0,.35), 0 0 0 1px rgba(0,0,0,.10)"></div>
<div class="a" style="left:344px;top:239px;width:290px;height:22px;background:#efefef;border-radius:4px"></div>
<div class="m" style="left:376px;top:239.0px">Profiler</div>
<div class="m" style="left:376px;top:261.0px">Profiler (Standalone Process)</div>
<div class="m" style="left:376px;top:283.0px">Memory Profiler</div>
<div class="m" style="left:376px;top:305.0px">Frame Debugger</div>
<div class="m" style="left:376px;top:327.0px">Physics Debugger</div>
<div class="m" style="left:376px;top:358.0px">Import Activity</div>
<div class="m" style="left:376px;top:389.0px">Performance Markers</div>
<div class="m" style="left:376px;top:420.0px">Input Debugger</div>
<div class="m" style="left:376px;top:451.0px">Rendering Debugger</div>
<div class="m" style="left:376px;top:473.0px">Render Graph Viewer</div>
<div class="m" style="left:376px;top:504.0px">IMGUI Debugger</div>
<div class="m" style="left:578px;top:239.0px">Ctrl+7</div>
<div class="sep" style="left:347px;top:353px;width:284px"></div>
<div class="sep" style="left:347px;top:384px;width:284px"></div>
<div class="sep" style="left:347px;top:415px;width:284px"></div>
<div class="sep" style="left:347px;top:446px;width:284px"></div>
<div class="sep" style="left:347px;top:499px;width:284px"></div>
<div class="a" style="left:361px;top:241px;width:204px;height:51px;border:3px solid #e3212b"></div>
</body></html>
